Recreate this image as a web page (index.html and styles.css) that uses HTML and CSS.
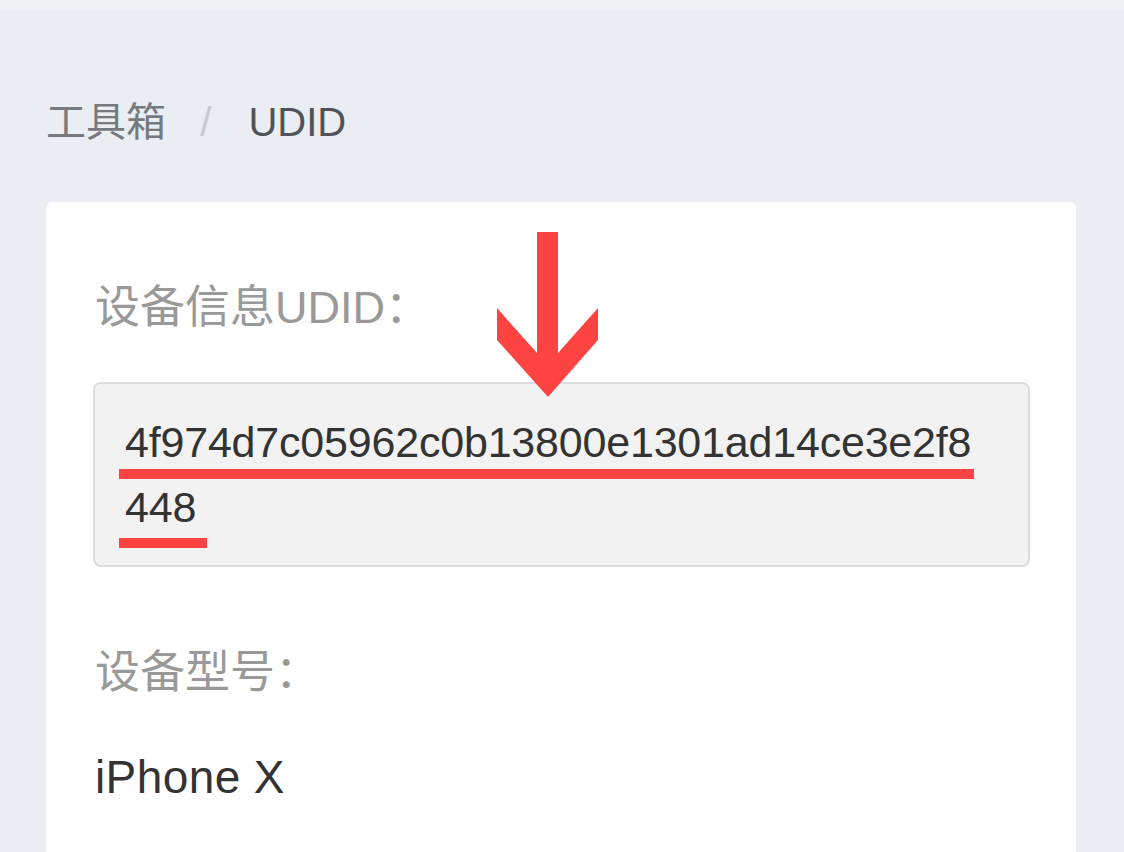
FILE: index.html
```html
<!DOCTYPE html>
<html lang="zh-CN">
<head>
    <meta charset="UTF-8">
    <meta name="viewport" content="width=device-width, initial-scale=1.0">
    <title>工具箱 - UDID</title>
    <link rel="stylesheet" href="styles.css">
</head>
<body>
    <div class="topbar"></div>
    <div class="breadcrumb">
        <span class="crumb">工具箱</span>
        <span class="sep">/</span>
        <span class="crumb current">UDID</span>
    </div>
    <div class="card">
        <svg class="arrow" width="101" height="165" viewBox="0 0 101 165">
            <polygon points="40,0 61,0 61,121 101,76 101,108 51,165 0,108 0,76 40,121" fill="#fe4343"/>
        </svg>
        <div class="label">设备信息UDID：</div>
        <div class="udid-box">
            <span class="mark">4f974d7c05962c0b13800e1301ad14ce3e2f8</span><br>
            <span class="mark last">448</span>
        </div>
        <div class="label model-label">设备型号：</div>
        <div class="value">iPhone X</div>
    </div>
</body>
</html>
```

FILE: styles.css
```css
body {
    margin: 0;
    background-color: #eaedf1;
    font-family: "Liberation Sans", "Noto Sans CJK SC", sans-serif;
    color: #333;
    overflow: hidden;
}
.topbar {
    height: 10px;
    background-color: #eff0f2;
}
.breadcrumb {
    padding: 84px 0 0 46px;
    font-size: 40px;
    line-height: 56px;
    height: 56px;
}
.crumb {
    color: #76797d;
}
.sep {
    color: #c6c9ce;
    margin: 0 26px 0 23px;
}
.crumb.current {
    color: #4f5359;
}
.card {
    position: relative;
    margin: 52px 48px 0 46px;
    padding: 74px 46px 60px 49px;
    background-color: #fff;
    border-radius: 6px;
    min-height: 700px;
}
.arrow {
    position: absolute;
    left: 451px;
    top: 30px;
    z-index: 2;
}
.label {
    font-size: 45px;
    line-height: 63px;
    color: #999;
}
.udid-box {
    margin: 43px 0 0 -2px;
    width: 937px;
    padding: 26px 0 25px 30px;
    box-sizing: border-box;
    background-color: #f2f2f2;
    border: 2px solid #dcdcdc;
    border-radius: 8px;
    font-size: 43px;
    line-height: 65px;
    letter-spacing: -0.2px;
    color: #333;
    white-space: nowrap;
}
.mark {
    margin-left: -6px;
    padding: 0 3px 13px 6px;
    background: linear-gradient(#fe4343, #fe4343) no-repeat left bottom / 100% 10px;
}
.mark.last {
    padding-right: 11px;
    padding-bottom: 17px;
}
.model-label {
    margin-top: 74px;
}
.value {
    margin-top: 41px;
    font-size: 46px;
    line-height: 64px;
    letter-spacing: 0.4px;
    color: #333;
}
```
